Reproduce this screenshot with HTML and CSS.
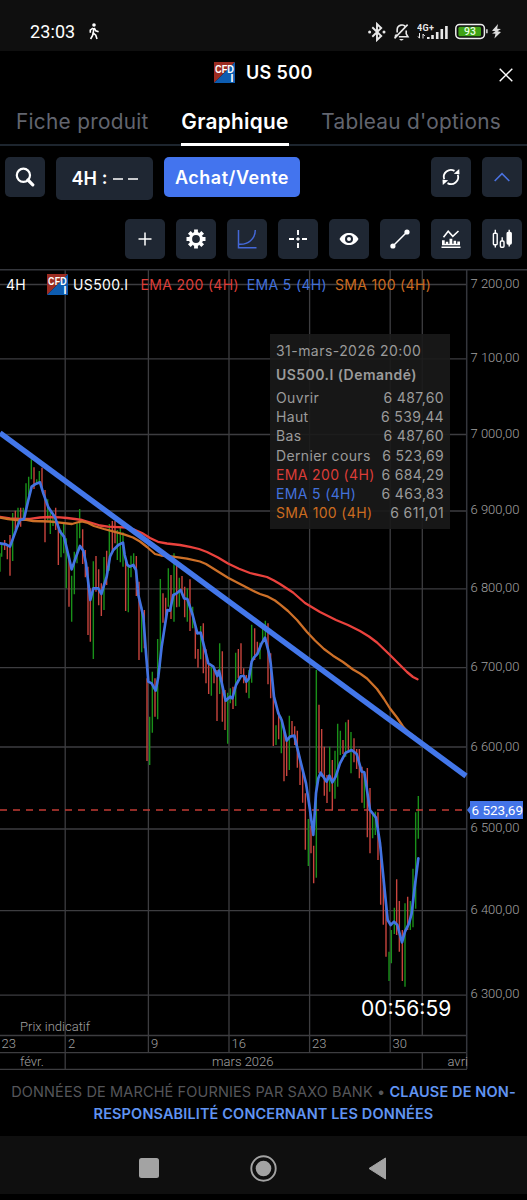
FILE: index.html
```
<!DOCTYPE html>
<html lang="fr">
<head>
    <meta charset="UTF-8">
    <meta name="viewport" content="width=device-width, initial-scale=1.0">
    <title>US 500</title>
    <link rel="stylesheet" href="styles.css">
</head>
<body>
    <div class="statusbar">
        <span class="clock">23:03</span>
        <svg class="walk" width="12" height="17" viewBox="0 0 12 17"><circle cx="6" cy="2" r="1.8" fill="#fff"/><path d="M5.7 5 5.3 10 7.8 12.2 9 16M5.2 9.5 4.6 12.4 2.6 16M5 5 2.3 7.2V9.8M6.2 5 7.8 7.8 10.6 8.8" fill="none" stroke="#fff" stroke-width="1.6"/></svg>
        <div class="status-icons">
            <svg width="18" height="20" viewBox="0 0 18 20" fill="none" stroke="#e8e8e8" stroke-width="1.9"><path d="M4.3 5.2 13.2 14 9 18V2L13.2 6 4.3 14.8"/><g fill="#e8e8e8" stroke="none"><circle cx="1.6" cy="10" r="1.5"/><circle cx="16" cy="10" r="1.5"/></g></svg>
            <svg width="17" height="20" viewBox="0 0 18 20" fill="none" stroke="#e8e8e8" stroke-width="1.7"><path d="M4.4 10.5V8C4.4 1.7 12 1.2 13.4 5.2M14 8.3V12L15.8 15H6.2M1.6 16.8 15.5 2.2M3.8 12.5 2 15"/><path d="M6.5 17.3H11.5L9.5 19H8.2Z" fill="#e8e8e8" stroke="none"/></svg>
            <svg width="31" height="18" viewBox="0 0 31 18" fill="#e8e8e8"><text class="net" x="0" y="8" textLength="17">4G+</text><path d="M2.5 10V15M1 13.4 2.5 15.3M6 15.5V11M6 11 7.8 13" stroke="#e8e8e8" fill="none"/><path d="M10 14h2.6v2H10zM14.2 12h2.6v4h-2.6zM18.9 9h2.6v7h-2.6zM23.5 6h2.6v10h-2.6zM28.1 3h2.6v13h-2.6z"/></svg>
            <svg width="33" height="17" viewBox="0 0 33 17"><rect x="0.8" y="1.4" width="28.6" height="14" rx="3.8" fill="none" stroke="#eee" stroke-width="1.5"/><rect x="3.4" y="3.8" width="22.6" height="9.4" rx="1.5" fill="#3fa215"/><path d="M31.2 6.2h1.4v4h-1.4z" fill="#eee"/><text class="batt" x="14.9" y="12.2">93</text></svg>
            <svg class="bolt" width="9" height="15" viewBox="0 0 9 15"><path d="M6 0 0 6.8 3.5 7.2 0 9.5 3.5 9.7 2.4 14.5 9 8 5.5 7.3 9 4.9 5.2 4.7Z" fill="#ddd"/></svg>
        </div>
    </div>

    <header class="title">
        <svg class="cfd" viewBox="0 0 21 21"><path d="M0 0H21L0 21Z" fill="#9c2c22"/><path d="M21 0V21H0Z" fill="#0d5cb0"/><text x="1" y="11" textLength="19" lengthAdjust="spacingAndGlyphs">CFD</text><text x="16.4" y="19.6">I</text></svg>
        <h1>US 500</h1>
        <svg class="close" width="14" height="14" viewBox="0 0 14 14"><path d="M.7.7 13.3 13.3M13.3.7.7 13.3" stroke="#fff" stroke-width="1.4"/></svg>
    </header>

    <nav class="tabs">
        <a class="tab">Fiche produit</a>
        <a class="tab active">Graphique</a>
        <a class="tab">Tableau d'options</a>
    </nav>

    <div class="toolbar">
        <button class="btn"><svg width="20" height="20" viewBox="0 0 20 20" fill="none" stroke="#fff"><circle cx="8.4" cy="8.3" r="6.6" stroke-width="2.2"/><path d="M13 13 17.8 17.8" stroke-width="3.2" stroke-linecap="round"/></svg></button>
        <button class="btn period"><span>4H</span><span class="colon">:</span><svg width="25" height="4" viewBox="0 0 25 4"><path d="M0 2H10M15 2H25" stroke="#fff" stroke-width="1.6"/></svg></button>
        <button class="btn trade">Achat/Vente</button>
        <button class="btn refresh"><svg width="20" height="20" viewBox="0 0 20 20" fill="none" stroke="#fff" stroke-width="1.8"><path d="M3.2 12.3A7.1 7.1 0 0 1 13.5 3.9M16.8 7.7A7.1 7.1 0 0 1 6.5 16.1"/><path d="M12.8 6.8 18.5 7.3 18.2 2Z M7.2 13.2 1.5 12.7 1.8 18Z" fill="#fff" stroke="none"/></svg></button>
        <button class="btn"><svg width="16" height="10" viewBox="0 0 16 10"><path d="M.7 9 8 1.6 15.3 9" fill="none" stroke="#4a72e0" stroke-width="1.6"/></svg></button>
    </div>

    <div class="toolbar tools">
        <button class="btn"><svg width="14" height="14" viewBox="0 0 14 14"><path d="M7 .5V13.5M.5 7H13.5" stroke="#fff" stroke-width="1.5"/></svg></button>
        <button class="btn"><svg width="20" height="20" viewBox="-10 -10 20 20" fill="none" stroke="#fff"><circle r="5.5" stroke-width="3.2"/><path d="M0-9.5V-6M0 9.5V6M-9.5 0H-6M9.5 0H6M-6.7-6.7-4.5-4.5M6.7 6.7 4.5 4.5M6.7-6.7 4.5-4.5M-6.7 6.7-4.5 4.5" stroke-width="3.8"/></svg></button>
        <button class="btn"><svg width="20" height="20" viewBox="0 0 20 20" fill="none" stroke="#4468d8" stroke-width="1.5"><path d="M1.5 1V18.7H19.5M2 15.3C11 16 18.3 10 18.3 1"/></svg></button>
        <button class="btn"><svg width="18" height="18" viewBox="0 0 18 18"><path d="M9 0V5M9 13V18M0 9H5M13 9H18M7.4 9H10.6M9 7.4V10.6" stroke="#fff" stroke-width="1.9"/></svg></button>
        <button class="btn"><svg width="20" height="14" viewBox="0 0 20 14"><path d="M.5 7C3 2.7 6 1 10 1S17 2.7 19.5 7C17 11.3 14 13 10 13S3 11.3.5 7Z" fill="#fff"/><circle cx="10" cy="7" r="3" fill="#fff" stroke="#1d2532" stroke-width="2"/></svg></button>
        <button class="btn"><svg width="20" height="20" viewBox="0 0 20 20"><path d="M2.7 17.2 17.2 2.8" stroke="#fff" stroke-width="1.5"/><circle cx="2.9" cy="17" r="2.6" fill="#fff"/><circle cx="17" cy="3" r="2.6" fill="#fff"/></svg></button>
        <button class="btn"><svg width="20" height="20" viewBox="0 0 20 20"><path d="M2.5 8.3 7.2 2.3 11.8 7.3 17.5 2" fill="none" stroke="#fff" stroke-width="1.6"/><path d="M1 11.3h2.7v3.4h1.1v-1.9h2.4v1.9h1.3V9.8h2.8v4.9h1.3v-3h2.5v3h1.2v-2.3H19v3.8H1zM.5 17.5h19V19H.5z" fill="#fff"/></svg></button>
        <button class="btn"><svg width="20" height="20" viewBox="0 0 20 20" fill="none" stroke="#fff" stroke-width="1.4"><rect x="1.4" y="4.2" width="3.8" height="11.5" rx="1"/><rect x="8.4" y="12" width="3.6" height="6.2" rx="1"/><rect x="15.2" y="3.5" width="4" height="11.5" rx="1" fill="#fff"/><path d="M3.3.8V4M3.3 16V18.5M10.2 8.2V12M17.2.8V17.6"/></svg></button>
    </div>

    <main class="chart">
        <svg class="plot" width="527" height="803" viewBox="0 269 527 803">
            <path class="grid" d="M0 284.5H466M0 358.8H466M0 434.5H466M0 511H466M0 588.8H466M0 667.7H466M0 747H466M0 829H466M0 910.6H466M0 995.2H466M0 1035.5H466M0 1052.7H466M0 1069.3H467"/>
            <path class="grid" d="M65.2 270V1069M148.4 270V1052M229 270V1052M309.6 270V1052M390.2 270V1052M422.3 270V1035M422.3 1053V1069"/>
            <path class="frame" d="M0 269.8H527M466.7 270V1069"/>

            <!-- candles: February to 9 March -->
            <g transform="translate(0 420) scale(.33333)">
                <path class="up" d="M0 400V455M5 370V410M38 279V423M54 263V320M70 263V300M78 190V275M86 170V225M94 118V178M110 178V190M118 153V190M143 238V300M151 270V342M159 280V318M183 330V412M191 309V400M199 355V505M215 467V605M223 395V523M231 310V430M239 267V355M280 424V717M312 411V570M328 312V452M352 330V420M361 322V427M369 337V440M385 435V577M393 407V472M401 400V445M425 560V697"/>
                <path class="down" d="M14 360V390M22 372V418M30 345V467M46 272V330M62 263V320M102 142V207M126 143V210M135 210V367M167 263V330M175 310V435M207 410V560M248 328V432M256 390V472M264 440V645M271 505V665M288 408V515M296 448V556M304 490V588M320 392V495M337 303V400M345 303V370M377 415V573M409 408V528M417 485V720M433 570V685"/>
            </g>
            <!-- candles: 9 to 20 March -->
            <g transform="translate(130 520) scale(.33333)">
                <path class="up" d="M59 590V735M67 455V638M83 357V598M91 177V445M115 145V260M132 100V305M148 173V260M172 205V305M188 260V325M212 318V418M244 440V527M269 370V522M293 518V671M301 505V550M317 398V558M357 450V535M365 314V488M390 368V418M398 325V370M406 302V350M438 616V675"/>
                <path class="down" d="M51 475V723M75 475V590M99 220V308M107 233V305M123 165V297M140 130V262M156 168V215M164 200V292M180 178V333M196 320V416M204 387V443M220 310V460M228 388V490M236 435V522M252 440V490M261 450V603M277 394V605M285 510V630M309 500V567M325 387V475M333 370V462M341 445V490M349 465V518M374 325V420M382 365V402M414 310V493M422 400V535M430 500V678M446 575V658"/>
            </g>
            <!-- candles: 20 to 31 March -->
            <g transform="translate(260 620) scale(.33333)">
                <path class="up" d="M64 290V400M88 287V450M145 597V738M169 150V773M209 380V515M225 392V536M233 311V500M241 332V405M257 307V410M273 336V460M313 455V565M338 580V655M346 575V645M387 995V1083M394 930V1030M403 863V942M435 850V1100M451 843V930M459 746V922M467 577V866M475 528V656"/>
                <path class="down" d="M72 330V484M80 360V468M96 303V350M104 319V375M112 332V443M120 410V495M128 450V548M136 520V689M153 617V700M161 677V790M177 254V460M185 327V470M193 380V527M201 465V549M217 420V572M249 360V402M265 299V395M282 355V427M290 387V447M298 387V475M306 440V548M322 444V652M330 504V700M354 577V720M362 680V854M370 780V914M378 850V1010M410 778V945M418 843V995M427 930V1083M443 830V930"/>
            </g>

            <path class="last" d="M0 810H466"/>
            <polyline class="ema200" points="0,517 10,518.5 20,519 30,518.8 40,517.5 50,517 60,517.3 67,518 75,519 82,520 92,523 100,525.5 108,526.7 118,527.2 127,527.5 134,529.5 142,533 150,538 158,541.8 167,543.5 180,545 190,546.8 199,549 207,552 218,557.5 228,563.5 239,568.7 250,573 259,575.2 267,577 274,580.5 280,584 293,592.5 305,603 320,612 336,620 348,625 360,631 369,636.5 377,642.5 390,655 399,664 407,672 413,677 417.5,679.3"/>
            <polyline class="sma100" points="0,517.7 8,519 17,520 25,519.5 33,521 50,521.5 60,522.7 72,524 77,522.5 82,521.3 88,523 94,526 104,529 113,531.3 124,534.3 133,537.5 140,541.5 147,547 155,554 161,555.5 173,556.7 187,558.7 200,561.5 206,564 212,567.7 220,572.7 228,577.7 241,584.5 253,590.7 260,594 268,596.7 275,600.5 280,604.3 288,611 297,620 307,632 315,640.5 324,649 333,655.7 343,662 353,669.5 360,673.5 367,678.5 377,689 384,699 390,708.5 397,717.5 403,726.5 408,732 415,737"/>
            <polyline class="ema5" transform="translate(0 420) scale(.33333)" points="0,370 18,373 30,380 50,325 60,300 72,297 85,240 95,200 105,193 120,187 130,220 145,262 165,292 180,335 192,350 205,405 215,448 230,405 240,378 250,392 258,430 271,540 280,505 295,505 304,522 320,470 330,410 340,390 355,375 369,368 374,405 382,435 390,440 400,435 408,450 415,525 430,590 438,700 445,785 455,790 467,812 475,770 485,680 502,570 510,572 520,525 530,520 542,510 552,535 562,537 578,585 592,640 602,638 625,730 640,740 652,768 657,752 677,842 690,830 697,835 708,795 723,768 732,768 739,785 747,775 755,725 762,712 772,702 785,670 795,653 807,700 812,730 822,830 835,880 845,900 860,962 870,950 883,947 898,1010 918,1090 930,1170 940,1245 948,1120 955,1075 962,1058 980,1085 988,1067 997,1087 1007,1070 1020,1030 1037,998 1055,990 1070,1002 1085,1055 1093,1057 1110,1170 1128,1193 1140,1270 1155,1420 1163,1500 1172,1515 1182,1505 1192,1515 1206,1567 1215,1535 1227,1510 1235,1480 1243,1410 1255,1315"/>
            <path class="trend" d="M0 433 466 776"/>

            <g class="axis">
                <text x="470.5" y="287.5">7 200,00</text>
                <text x="470.5" y="362.3">7 100,00</text>
                <text x="470.5" y="437.5">7 000,00</text>
                <text x="470.5" y="514">6 900,00</text>
                <text x="470.5" y="592">6 800,00</text>
                <text x="470.5" y="670.5">6 700,00</text>
                <text x="470.5" y="750.5">6 600,00</text>
                <text x="470.5" y="832">6 500,00</text>
                <text x="470.5" y="914">6 400,00</text>
                <text x="470.5" y="998.3">6 300,00</text>
                <text x="1.5" y="1048">23</text>
                <text x="68" y="1048">2</text>
                <text x="151" y="1048">9</text>
                <text x="231.5" y="1048">16</text>
                <text x="312" y="1048">23</text>
                <text x="392.5" y="1048">30</text>
                <text x="20" y="1066">févr.</text>
                <text x="212" y="1066">mars 2026</text>
                <text x="447.5" y="1066">avri</text>
                <text x="20" y="1030.5">Prix indicatif</text>
            </g>
            <path d="M467 810 470 806V801H523V819H470V814Z" fill="#4374e8"/>
            <text class="price" x="471.5" y="814.7">6 523,69</text>
            <text class="countdown" x="361" y="1016">00:56:59</text>
        </svg>

        <div class="legend">
            <span class="l-period">4H</span>
            <svg class="cfd" viewBox="0 0 21 21"><path d="M0 0H21L0 21Z" fill="#9c2c22"/><path d="M21 0V21H0Z" fill="#0d5cb0"/><text x="1" y="11" textLength="19" lengthAdjust="spacingAndGlyphs">CFD</text><text x="16.4" y="19.6">I</text></svg>
            <span class="l-name">US500.I</span>
            <span class="l-ema200">EMA 200 (4H)</span>
            <span class="l-ema5">EMA 5 (4H)</span>
            <span class="l-sma100">SMA 100 (4H)</span>
        </div>

        <div class="tooltip">
            <div class="date">31-mars-2026 20:00</div>
            <div class="name">US500.I (Demandé)</div>
            <div class="row"><span>Ouvrir</span><span>6 487,60</span></div>
            <div class="row"><span>Haut</span><span>6 539,44</span></div>
            <div class="row"><span>Bas</span><span>6 487,60</span></div>
            <div class="row"><span>Dernier cours</span><span>6 523,69</span></div>
            <div class="row"><span class="l-ema200">EMA 200 (4H)</span><span>6 684,29</span></div>
            <div class="row"><span class="l-ema5">EMA 5 (4H)</span><span>6 463,83</span></div>
            <div class="row"><span class="l-sma100">SMA 100 (4H)</span><span>6 611,01</span></div>
        </div>
    </main>

    <footer class="disclaimer">DONNÉES DE MARCHÉ FOURNIES PAR SAXO BANK • <a>CLAUSE DE NON-<br>RESPONSABILITÉ CONCERNANT LES DONNÉES</a></footer>

    <div class="android-nav">
        <svg width="20" height="20" viewBox="0 0 20 20"><rect width="20" height="20" rx="2.5" fill="#a3a3a3"/></svg>
        <svg width="27" height="27" viewBox="0 0 27 27"><circle cx="13.5" cy="13.5" r="12.2" fill="none" stroke="#a3a3a3" stroke-width="1.9"/><circle cx="13.5" cy="13.5" r="7.8" fill="#a3a3a3"/></svg>
        <svg width="19" height="23" viewBox="0 0 19 23"><path d="M1 11.5 17.5 1V22Z" fill="#a3a3a3" stroke="#a3a3a3" stroke-linejoin="round"/></svg>
    </div>
</body>
</html>
```
FILE: styles.css
```
* { box-sizing: border-box; }
body { margin: 0; background: #000; color: #fff; font-family: Inter, "Liberation Sans", sans-serif; width: 527px; height: 1200px; overflow: hidden; }
svg { display: block; flex: none; }

.statusbar { height: 51px; background: #0f0f0f; display: flex; align-items: center; padding: 12px 26px 0 30px; }
.clock { font-family: Roboto, sans-serif; font-size: 18px; font-weight: 400; letter-spacing: 0.1px; }
.walk { margin-left: 13px; }
.status-icons { display: flex; align-items: center; gap: 7px; margin-left: auto; }
.bolt { margin-left: -3px; }
.net { font: 700 9px Roboto, sans-serif; }
.batt { font: 500 10.5px Roboto, sans-serif; fill: #e6ffe0; text-anchor: middle; }

.title { height: 47px; display: flex; align-items: center; padding: 0 14px 5px 214px; }
.title h1 { font-size: 18px; font-weight: 600; letter-spacing: 0.35px; margin: 0 0 0 11px; }
.title .close { margin: 5px 0 0 auto; }
.cfd { width: 21px; height: 21px; }
.cfd text { font: 700 10.5px "Liberation Sans", sans-serif; fill: #fff; }

.tabs { display: flex; height: 48px; padding: 0 26px 0 16px; justify-content: space-between; border-bottom: 2px solid #1d252e; }
.tab { font-size: 20.8px; line-height: 48px; height: 48px; letter-spacing: 0.28px; color: #62656f; }
.tab.active { color: #fff; font-weight: 600; border-bottom: 3px solid #fff; }

.toolbar { display: flex; align-items: flex-start; gap: 11px; padding: 11px 5px 0; }
.btn { width: 40px; height: 40px; flex: none; border: 0; border-radius: 5px; padding: 0; background: #1f2733; color: #fff; font: 600 18px Inter, sans-serif; display: flex; align-items: center; justify-content: center; }
.period { width: 97px; height: 43px; gap: 5px; }
.period .colon { margin-bottom: 2px; }
.trade { width: 136px; background: #4374ee; letter-spacing: 0.5px; }
.refresh { margin-left: auto; }
.tools { justify-content: flex-end; padding-top: 19px; }

.chart { position: relative; height: 803px; margin-top: 10px; }
.grid { fill: none; stroke: #3d3d40; stroke-width: 1.3; }
.frame { fill: none; stroke: #34363c; stroke-width: 1.5; }
.up, .down { fill: none; stroke-width: 4.2; }
.up { stroke: #199019; }
.down { stroke: #c8443d; }
.last { stroke: #c23b35; stroke-width: 1.4; stroke-dasharray: 7 6; }
.ema200, .sma100, .ema5 { fill: none; stroke-width: 2.3; stroke-linejoin: round; stroke-linecap: round; }
.ema200 { stroke: #ea423d; }
.sma100 { stroke: #cd7028; }
.ema5 { stroke: #4273e2; stroke-width: 8; }
.trend { stroke: #4377ea; stroke-width: 5.4; }
.axis { font: 300 13px Roboto, sans-serif; fill: #a0a0a0; }
.price { font: 13.5px Roboto, sans-serif; fill: #fff; }
.countdown { font: 21px Inter, sans-serif; fill: #fff; }

.legend { position: absolute; top: 5px; left: 6px; display: flex; align-items: center; font-size: 14px; letter-spacing: 0.33px; white-space: nowrap; }
.legend .cfd { margin: 0 5px 0 21px; }
.l-ema200 { color: #dc3d38; }
.l-ema5 { color: #4371dc; }
.l-sma100 { color: #cc6c20; }
.legend .l-ema200 { margin-left: 12px; }
.legend .l-ema5, .legend .l-sma100 { margin-left: 8px; }

.tooltip { position: absolute; left: 270px; top: 65px; width: 180px; height: 195px; padding: 6px 6px 0 6px; background: rgba(26, 26, 26, 0.9); color: #9b9b9b; font-size: 14px; letter-spacing: 0.35px; line-height: 19.2px; }
.tooltip .date { line-height: 22px; letter-spacing: 0.45px; }
.tooltip .name { font-weight: 600; line-height: 26px; letter-spacing: 0.45px; }
.row { display: flex; justify-content: space-between; white-space: nowrap; }

.disclaimer { height: 64px; padding-top: 9px; text-align: center; font-size: 14.5px; letter-spacing: 0.13px; line-height: 22px; color: #55565a; white-space: nowrap; }
.disclaimer a { color: #6094f2; font-weight: 600; }
.android-nav { height: 58px; background: #0f0f0f; display: flex; align-items: center; padding: 6px 0 0 139px; gap: 91px; }
```
